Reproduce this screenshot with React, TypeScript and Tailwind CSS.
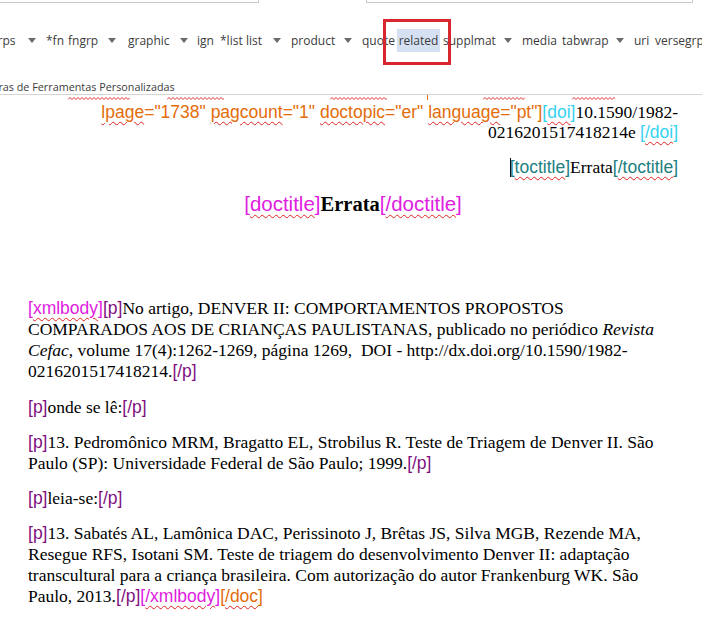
import React from "react"

const serif = "font-['Liberation_Serif','Times_New_Roman',serif]"

const tagColors = {
    orange: "text-[#e46c0a]",
    cyan: "text-[#36d2f0]",
    teal: "text-[#217f80]",
    magenta: "text-[#e020e0]",
    purple: "text-[#7f0f7f]",
}

const wavy = "underline decoration-wavy decoration-[#e02424] decoration-1 underline-offset-[3px]"

function Tag({ c, open = "[", word, close = "]", squiggle = false }: { c: keyof typeof tagColors; open?: string; word: string; close?: string; squiggle?: boolean }) {
    return (
        <span className={`font-['Liberation_Sans',Arial,sans-serif] ${tagColors[c]}`}>
            {open}
            <span className={squiggle ? wavy : ""}>{word}</span>
            {close}
        </span>
    )
}

function Arrow() {
    return (
        <svg width="8" height="5" viewBox="0 0 8 5" className="block">
            <polygon points="0,0 8,0 4,5" fill="#6b6b6b" />
        </svg>
    )
}

function Squiggle({ w }: { w: number }) {
    let d = "M0 2.5"
    for (let x = 0; x < w; x += 2) d += ` L${x + 2} ${(x / 2) % 2 === 0 ? 0.5 : 2.5}`
    return (
        <svg width={w} height="3" className="block">
            <path d={d} fill="none" stroke="#e03030" strokeWidth="1" />
        </svg>
    )
}

// toolbar cells: [label, width]; null label = dropdown arrow
const ribbon: [string | null, number][] = [
    ["grps", 37],
    [null, 18],
    ["*fn", 22],
    ["fngrp", 40],
    [null, 20],
    ["graphic", 52],
    [null, 17],
    ["ign", 23],
    ["*list", 26],
    ["list", 27],
    [null, 18],
    ["product", 53],
    [null, 18],
    ["quote", 35],
    ["related", 46],
    ["supplmat", 61],
    [null, 18],
    ["media", 40],
    ["tabwrap", 54],
    [null, 18],
    ["uri", 21],
    ["versegrp", 60],
]

export default function App() {
    return (
        <div className="relative w-[702px] h-[640px] overflow-hidden bg-white">
            {/* Ribbon */}
            <div className="font-['Open_Sans','Noto_Sans',sans-serif] text-[#3c3c3c]">
                <div className="flex h-[3px]">
                    <div className="w-[259px] border-r border-b border-[#c9c9c9]" />
                    <div className="ml-[107px] w-[327px] border-l border-r border-b border-[#c9c9c9]" />
                </div>
                <div className="mt-[26px] -ml-[9px] flex h-[23px] items-center text-[12px] whitespace-nowrap">
                    {ribbon.map(([label, w], i) =>
                        label === null ? (
                            <div key={i} className="flex shrink-0 items-center" style={{ width: w }}>
                                <Arrow />
                            </div>
                        ) : label === "related" ? (
                            <div key={i} className="shrink-0" style={{ width: w }}>
                                <span className="flex h-[23px] w-[43px] items-center justify-center bg-[#d5e1f2]">{label}</span>
                            </div>
                        ) : (
                            <div key={i} className="shrink-0" style={{ width: w }}>
                                {label}
                            </div>
                        ),
                    )}
                </div>
                <div className="mt-[27px] -ml-[19px] h-[16px] border-b border-[#d4d4d4] text-[10.8px] leading-[15px] whitespace-nowrap">
                    Barras de Ferramentas Personalizadas
                </div>
            </div>

            {/* Document */}
            <div className="relative">
                <div className="flex h-[5px] items-end">
                    <div className="ml-[68px]"><Squiggle w={62} /></div>
                    <div className="ml-[37px]"><Squiggle w={57} /></div>
                    <div className="ml-[106px]"><Squiggle w={57} /></div>
                    <div className="ml-[40px] h-[5px] w-[1px] self-start bg-[#e46c0a]" />
                    <div className="ml-[55px]"><Squiggle w={42} /></div>
                    <div className="ml-[47px]"><Squiggle w={43} /></div>
                </div>

                <div className={`ml-[28px] w-[650px] ${serif} text-[17.5px] text-black`}>
                    <div className="mt-[2px] text-right leading-[20px] whitespace-nowrap">
                        <div>
                            <span className="font-['Liberation_Sans',Arial,sans-serif] text-[#e46c0a]">
                                <span className={wavy}>lpage</span>="1738" <span className={wavy}>pagcount</span>="1"{" "}
                                <span className={wavy}>doctopic</span>="er" <span className={wavy}>language</span>="pt"]
                            </span>
                            <Tag c="cyan" word="doi" squiggle />
                            10.1590/1982-
                        </div>
                        <div>
                            0216201517418214e <Tag c="cyan" word="/doi" squiggle />
                        </div>
                    </div>

                    <div className="mt-[15px] text-right leading-[20px] whitespace-nowrap">
                        <span className="inline-block h-[19px] w-px -mr-px align-[-4px] bg-black" />
                        <Tag c="teal" word="toctitle" squiggle />
                        Errata
                        <Tag c="teal" word="/toctitle" squiggle />
                    </div>

                    <div className="mt-[15px] text-center text-[20.5px] leading-[24px] whitespace-nowrap">
                        <Tag c="magenta" word="doctitle" squiggle />
                        <span className="font-bold">Errata</span>
                        <Tag c="magenta" word="/doctitle" squiggle />
                    </div>

                    <div className="mt-[82px] leading-[21px] whitespace-pre">
                        <p>
                            <span className="block">
                                <Tag c="magenta" word="xmlbody" squiggle />
                                <Tag c="purple" word="p" />
                                No artigo, DENVER II: COMPORTAMENTOS PROPOSTOS
                            </span>
                            <span className="block">
                                COMPARADOS AOS DE CRIANÇAS PAULISTANAS, publicado no periódico <i>Revista</i>
                            </span>
                            <span className="block">
                                <i>Cefac</i>, volume 17(4):1262-1269, página 1269,  DOI - http://dx.doi.org/10.1590/1982-
                            </span>
                            <span className="block">
                                0216201517418214.<Tag c="purple" word="/p" />
                            </span>
                        </p>

                        <p className="mt-[15px]">
                            <Tag c="purple" word="p" />
                            onde se lê:<Tag c="purple" word="/p" />
                        </p>

                        <p className="mt-[14px]">
                            <span className="block">
                                <Tag c="purple" word="p" />
                                13. Pedromônico MRM, Bragatto EL, Strobilus R. Teste de Triagem de Denver II. São
                            </span>
                            <span className="block">
                                Paulo (SP): Universidade Federal de São Paulo; 1999.<Tag c="purple" word="/p" />
                            </span>
                        </p>

                        <p className="mt-[14px]">
                            <Tag c="purple" word="p" />
                            leia-se:<Tag c="purple" word="/p" />
                        </p>

                        <p className="mt-[14px]">
                            <span className="block">
                                <Tag c="purple" word="p" />
                                13. Sabatés AL, Lamônica DAC, Perissinoto J, Brêtas JS, Silva MGB, Rezende MA,
                            </span>
                            <span className="block">
                                Resegue RFS, Isotani SM. Teste de triagem do desenvolvimento Denver II: adaptação
                            </span>
                            <span className="block">
                                transcultural para a criança brasileira. Com autorização do autor Frankenburg WK. São
                            </span>
                            <span className="block">
                                Paulo, 2013.<Tag c="purple" word="/p" />
                                <Tag c="magenta" word="/xmlbody" squiggle />
                                <Tag c="orange" word="/doc" squiggle />
                            </span>
                        </p>
                    </div>
                </div>
            </div>

            {/* selection marker round "related" */}
            <div className="absolute left-[383px] top-[19px] h-[46px] w-[68px] border-[3px] border-[#d7262e]" />
        </div>
    )
}
